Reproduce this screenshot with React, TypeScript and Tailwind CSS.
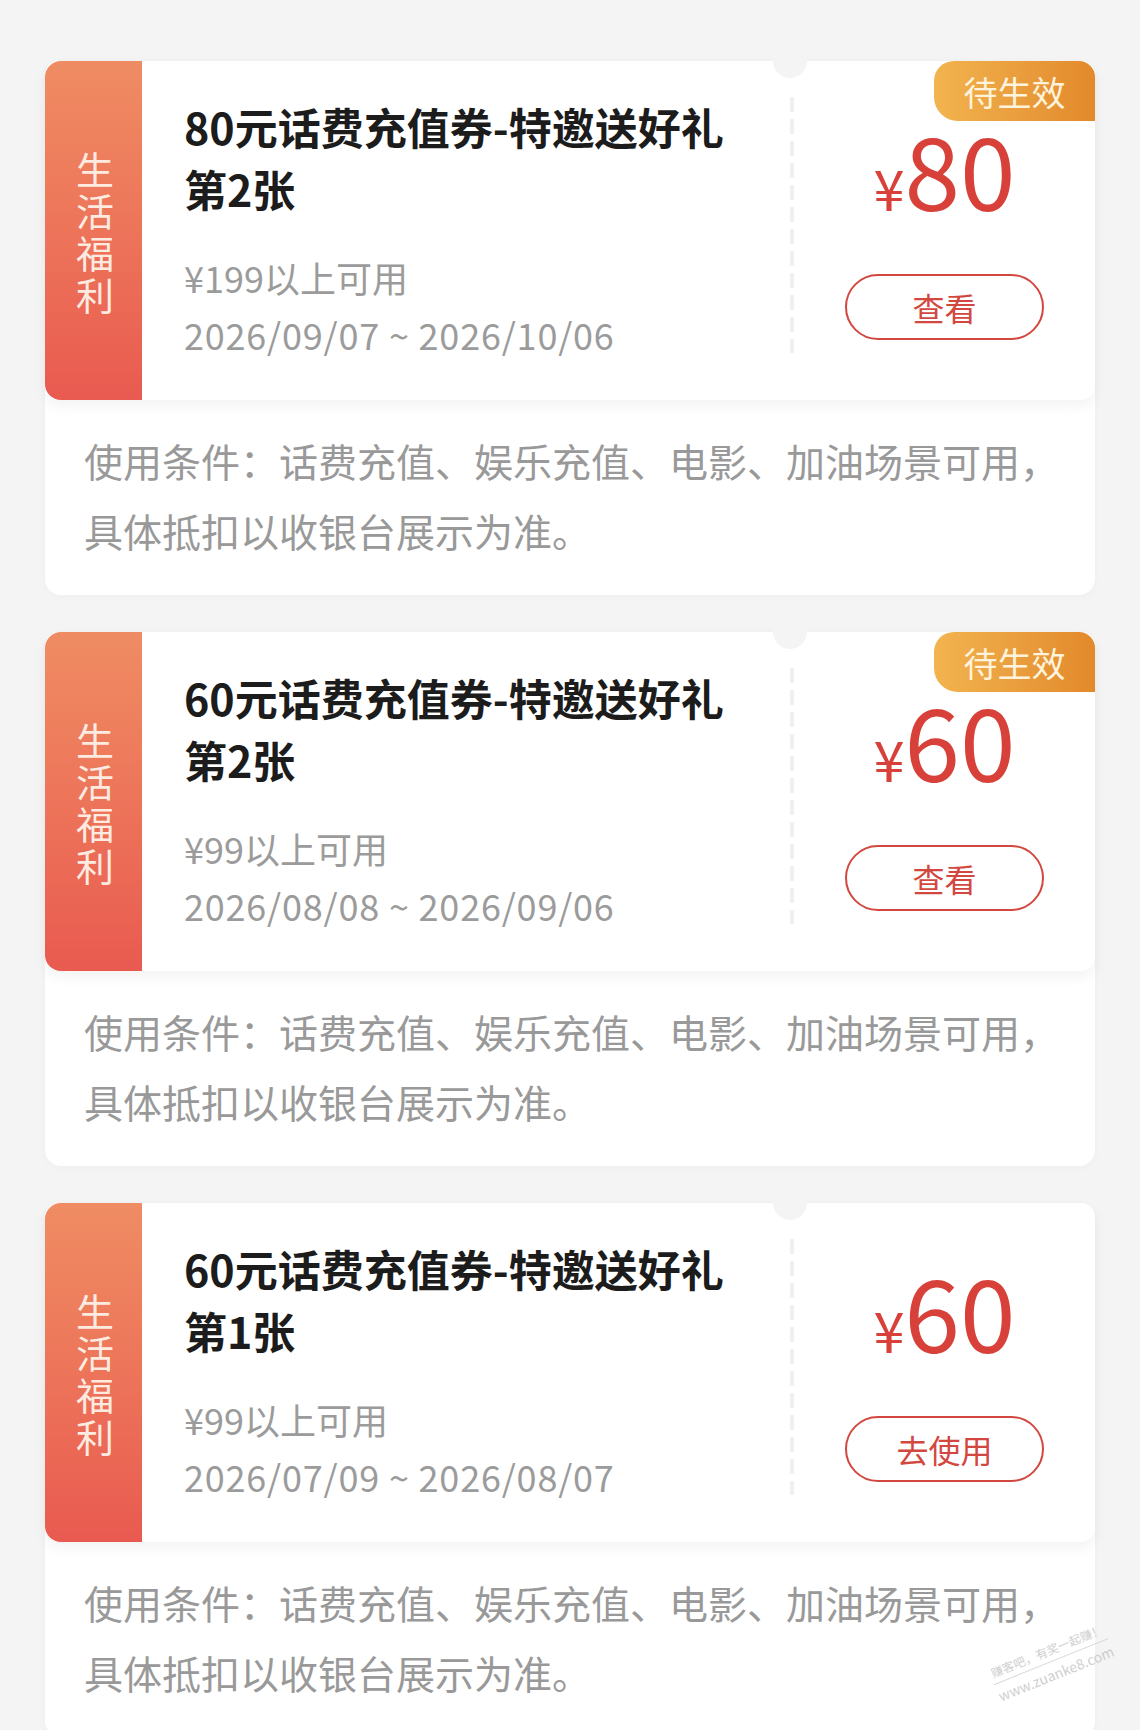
import React from "react";

type Coupon = {
  title: string;
  sub: string;
  limit: string;
  date: string;
  amount: string;
  pending: boolean;
  action: string;
};

const coupons: Coupon[] = [
  {
    title: "80元话费充值券-特邀送好礼",
    sub: "第2张",
    limit: "¥199以上可用",
    date: "2026/09/07 ~ 2026/10/06",
    amount: "80",
    pending: true,
    action: "查看",
  },
  {
    title: "60元话费充值券-特邀送好礼",
    sub: "第2张",
    limit: "¥99以上可用",
    date: "2026/08/08 ~ 2026/09/06",
    amount: "60",
    pending: true,
    action: "查看",
  },
  {
    title: "60元话费充值券-特邀送好礼",
    sub: "第1张",
    limit: "¥99以上可用",
    date: "2026/07/09 ~ 2026/08/07",
    amount: "60",
    pending: false,
    action: "去使用",
  },
];

const CouponCard = ({ c }: { c: Coupon }) => {
  return (
    <div className="rounded-[16px] bg-white shadow-[0_2px_8px_rgba(0,0,0,0.025)]">
      <div className="relative flex h-[339px] rounded-[14px] bg-white shadow-[0_6px_14px_rgba(0,0,0,0.05)]">
        {/* side tab */}
        <div className="flex w-[97px] flex-col items-center justify-center rounded-l-[16px] bg-gradient-to-b from-[#ef8c63] to-[#e95a50]">
          {"生活福利".split("").map((ch) => (
            <span key={ch} className="pl-[3px] text-[38px] leading-[42px] text-[#fdebe1]">
              {ch}
            </span>
          ))}
        </div>

        {/* info */}
        <div className="w-[648px] pl-[42px] pt-[34px]">
          <div className="text-[43px] font-semibold leading-[62px] text-[#1c1c1c]">
            <div>{c.title}</div>
            <div>{c.sub}</div>
          </div>
          <div className="mt-[30px] text-[36px] leading-[57px] text-[#9b9b9b]">
            <div>{c.limit}</div>
            <div className="tracking-[0.8px]">{c.date}</div>
          </div>
        </div>

        {/* dashed divider */}
        <div className="mt-[36px] mb-[47px] w-[4px] bg-[repeating-linear-gradient(to_bottom,#f0f0f0_0_15px,transparent_15px_22px)]" />
        <div className="absolute left-[728px] top-[-17px] h-[34px] w-[34px] rounded-full bg-[#f4f4f4]" />

        {/* amount */}
        <div className="flex flex-1 flex-col items-center pt-[57px]">
          <div className="flex items-baseline leading-[100px] text-[#d8413a]">
            <span className="text-[56px]">¥</span>
            <span className="text-[100px]">{c.amount}</span>
          </div>
          <button
            type="button"
            className="mt-[37px] flex h-[66px] w-[199px] items-center justify-center rounded-full border-[2.5px] border-[#d24840] text-[32px] text-[#d24840]"
          >
            {c.action}
          </button>
        </div>

        {c.pending && (
          <div className="absolute right-0 top-0 flex h-[60px] w-[161px] items-center justify-center rounded-tl-[20px] rounded-tr-[16px] rounded-bl-[24px] bg-gradient-to-r from-[#f2b44f] to-[#e2892b] text-[34px] text-[#fff3dc]">
            待生效
          </div>
        )}
      </div>

      <div className="pl-[39px] pr-[20px] pt-[25px] pb-[30px] text-[39px] leading-[70px] text-[#999999]">
        使用条件：话费充值、娱乐充值、电影、加油场景可用，具体抵扣以收银台展示为准。
      </div>
    </div>
  );
};

const App = () => {
  return (
    <div className="relative min-h-screen bg-[#f4f4f4] px-[45px] pt-[61px] font-['Noto_Sans_CJK_SC','Noto_Sans',sans-serif]">
      <div className="flex flex-col gap-[37px]">
        {coupons.map((c, i) => (
          <CouponCard key={i} c={c} />
        ))}
      </div>

      {/* watermark */}
      <div className="absolute left-[990px] top-[1642px] -rotate-[22deg] text-center text-[#c4c4c4] opacity-80">
        <div className="border-b border-[#cfcfcf] pb-[3px] text-[12px] leading-[16px]">赚客吧，有奖一起赚！</div>
        <div className="pt-[3px] text-[14px] leading-[18px]">www.zuanke8.com</div>
      </div>
    </div>
  );
};

export default App;
